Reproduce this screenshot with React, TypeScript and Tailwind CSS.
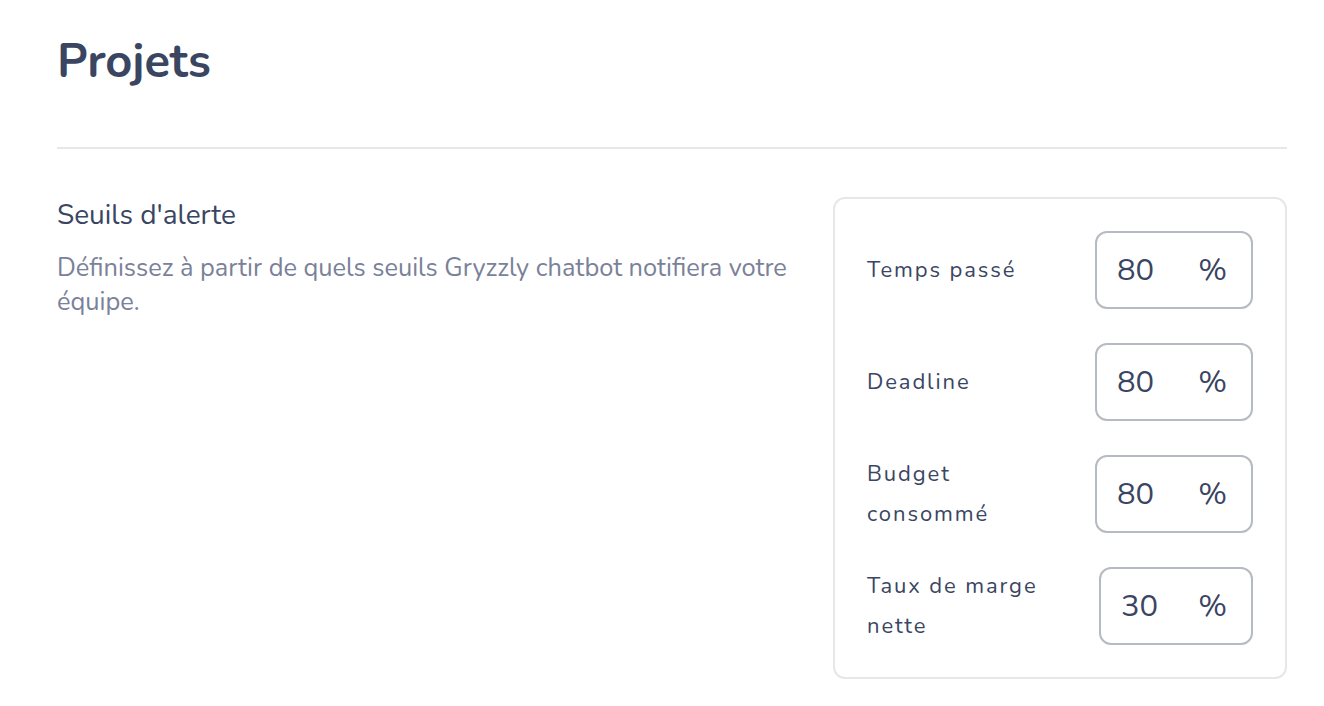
const thresholds = [
  { label: 'Temps passé', value: '80', inputWidth: 'w-[158px]' },
  { label: 'Deadline', value: '80', inputWidth: 'w-[158px]' },
  { label: 'Budget consommé', value: '80', inputWidth: 'w-[158px]' },
  { label: 'Taux de marge nette', value: '30', inputWidth: 'w-[154px]' },
];

function ThresholdRow({ label, value, inputWidth }: { label: string; value: string; inputWidth: string }) {
  return (
    <div className="flex h-[78px] items-center justify-between gap-4">
      <span className="max-w-[190px] text-[22px] leading-[40px] tracking-[1.9px] text-[#3a4562]">{label}</span>
      <div
        className={`flex h-[78px] shrink-0 items-center justify-between rounded-xl border-2 border-[#b6bac1] pl-[20px] pr-[24px] ${inputWidth}`}
      >
        <span className="text-[31px] text-[#3a4562]">{value}</span>
        <span className="text-[31px] text-[#3a4562]">%</span>
      </div>
    </div>
  );
}

export default function App() {
  return (
    <div className="min-h-screen bg-white pl-[57px] pr-[37px] font-['Nunito','Lato',sans-serif]">
      <h1 className="pt-[32px] pb-[55px] text-[47px] font-bold leading-[60px] text-[#3a4562]">Projets</h1>
      <div className="border-t-2 border-[#e6e7ea]" />
      <div className="flex justify-between pt-[48px]">
        <div className="w-[760px]">
          <h2 className="text-[28px] leading-[36px] text-[#3a4562]">Seuils d'alerte</h2>
          <p className="mt-[18px] text-[25.4px] leading-[34px] text-[#7a8199]">
            Définissez à partir de quels seuils Gryzzly chatbot notifiera votre équipe.
          </p>
        </div>
        <div className="flex w-[454px] flex-col gap-[34px] rounded-xl border-2 border-[#e6e7ea] p-[32px]">
          {thresholds.map((t) => (
            <ThresholdRow key={t.label} label={t.label} value={t.value} inputWidth={t.inputWidth} />
          ))}
        </div>
      </div>
    </div>
  );
}
